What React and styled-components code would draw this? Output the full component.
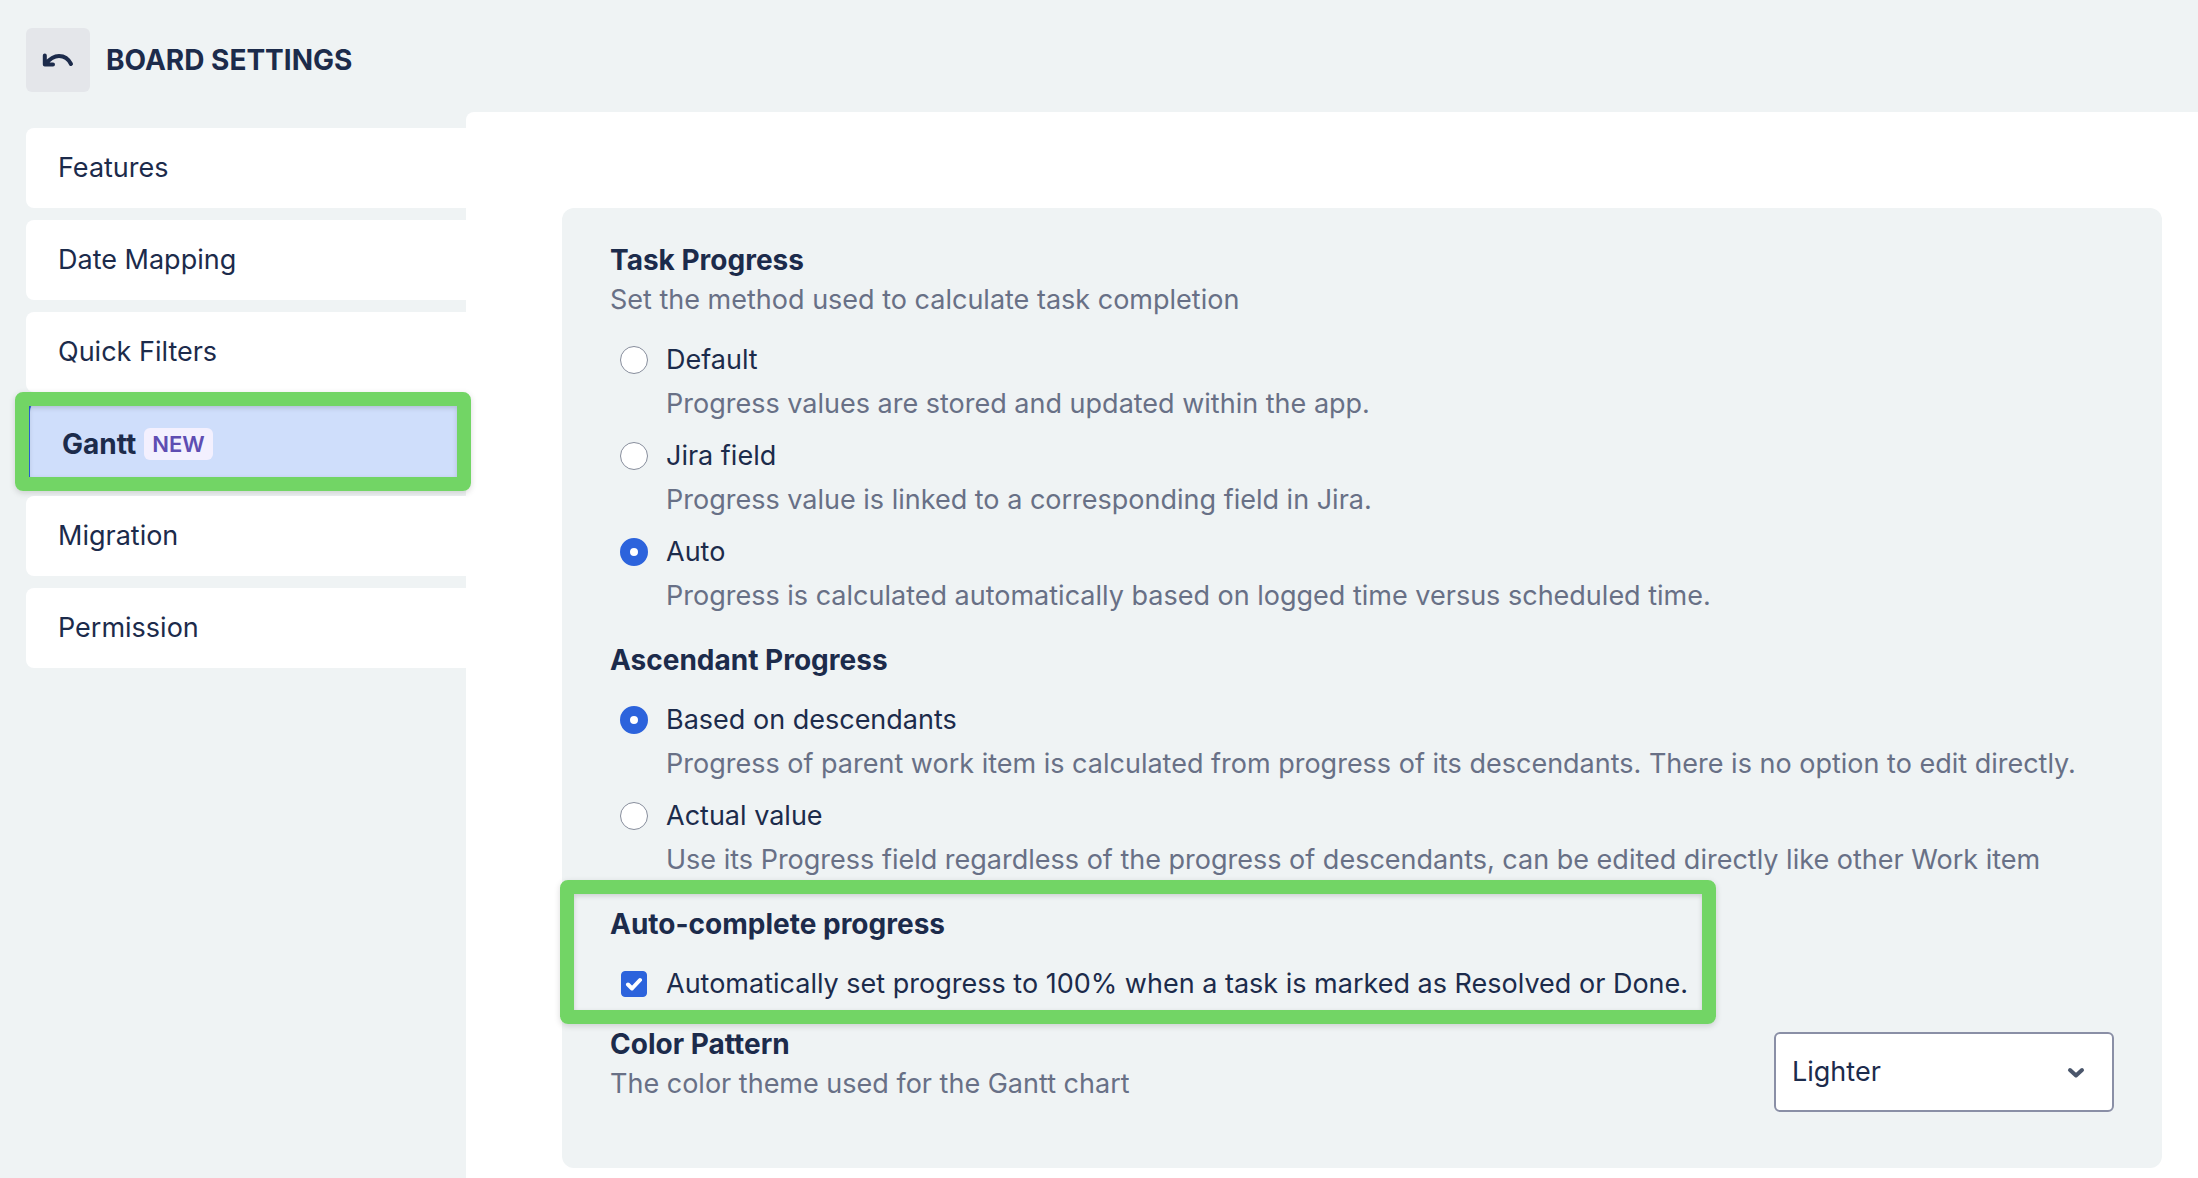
import React, { useState } from "react";
import styled, { createGlobalStyle } from "styled-components";

const GlobalStyle = createGlobalStyle`
  *, *::before, *::after {
    box-sizing: border-box;
  }

  body {
    margin: 0;
    background: #eff3f4;
    color: #1c2b4b;
    font-family: Inter, "Liberation Sans", sans-serif;
    font-size: 27px;
    line-height: 40px;
  }
`;

const Page = styled.div`
  display: flex;
  flex-direction: column;
  min-height: 100vh;
`;

const Header = styled.header`
  display: flex;
  align-items: center;
  gap: 16px;
  padding: 28px 26px 20px;
`;

const BackButton = styled.button`
  display: flex;
  align-items: center;
  justify-content: center;
  width: 64px;
  height: 64px;
  padding: 0;
  border: 0;
  border-radius: 6px;
  background: #e4e6ea;
  color: inherit;
  cursor: pointer;
`;

const Title = styled.h1`
  margin: 0;
  font-size: 28px;
  font-weight: 700;
`;

const Body = styled.div`
  display: flex;
  flex: 1;
`;

const Nav = styled.nav`
  display: flex;
  flex-direction: column;
  flex: 0 0 440px;
  gap: 12px;
  margin: 16px 0 0 26px;
`;

const NavItem = styled.div`
  position: relative;
`;

const NavLink = styled.a`
  display: flex;
  align-items: center;
  gap: 8px;
  height: 80px;
  padding-left: 32px;
  border-left: ${({ $active }) => ($active ? "4px solid #2c63dc" : "0")};
  border-radius: 8px 0 0 8px;
  background: ${({ $active }) => ($active ? "#cfdefb" : "#fff")};
  color: inherit;
  font-size: ${({ $active }) => ($active ? 28 : 27)}px;
  font-weight: ${({ $active }) => ($active ? 700 : 400)};
  text-decoration: none;
`;

const Badge = styled.span`
  padding: 0 8px;
  border-radius: 6px;
  background: #f3f0fe;
  color: #5e4db2;
  font-size: 22px;
  font-weight: 600;
  line-height: 32px;
`;

const Highlight = styled.div`
  position: absolute;
  inset: ${({ $inset }) => $inset};
  border: 14px solid #72d565;
  border-radius: 8px;
  box-shadow: 0 2px 6px rgba(0, 0, 0, 0.15),
    inset 0 2px 5px rgba(0, 0, 0, 0.15);
  pointer-events: none;
`;

const Main = styled.main`
  flex: 1;
  min-width: 0;
  padding: 96px 36px 10px 96px;
  border-top-left-radius: 8px;
  background: #fff;
`;

const Panel = styled.form`
  padding: 32px 48px 56px;
  border-radius: 12px;
  background: #eff3f4;
`;

const Section = styled.fieldset`
  position: relative;
  width: fit-content;
  margin: 0 0 ${({ $tight }) => ($tight ? 16 : 24)}px;
  padding: 0;
  border: 0;
`;

const Heading = styled.legend`
  padding: 0;
  font-size: 28px;
  font-weight: 700;
`;

const Hint = styled.p`
  margin: 0;
  color: #687086;
`;

const Options = styled.div`
  display: flex;
  flex-direction: column;
  gap: 8px;
  padding: 16px 0 0 10px;
`;

const Choice = styled.div`
  display: grid;
  grid-template-columns: 28px auto;
  column-gap: 18px;
  align-items: center;

  ${Hint} {
    grid-column: 2;
  }
`;

const ChoiceLabel = styled.label`
  line-height: 48px;
`;

const Radio = styled.input`
  appearance: none;
  width: 28px;
  height: 28px;
  margin: 0;
  border: 1px solid #878d9c;
  border-radius: 50%;
  background: #fff;

  &:checked {
    border: 10px solid #2c63dc;
  }
`;

const CheckWrap = styled.span`
  position: relative;
  display: grid;
  place-items: center;

  svg {
    position: absolute;
    pointer-events: none;
  }
`;

const Checkbox = styled.input`
  appearance: none;
  width: 26px;
  height: 26px;
  margin: 0;
  border: 1px solid #878d9c;
  border-radius: 4px;
  background: #fff;

  &:checked {
    border-color: #2c63dc;
    background: #2c63dc;
  }
`;

const ColorRow = styled.div`
  display: flex;
  align-items: flex-start;
  justify-content: space-between;
`;

const ColorLabel = styled.label`
  display: block;
  font-size: 28px;
  font-weight: 700;
`;

const SelectWrap = styled.div`
  position: relative;
  padding-top: 8px;

  svg {
    position: absolute;
    right: 29px;
    bottom: 33px;
    pointer-events: none;
  }
`;

const Select = styled.select`
  display: block;
  appearance: none;
  width: 340px;
  height: 80px;
  padding: 0 16px;
  border: 2px solid #8a8fa6;
  border-radius: 6px;
  background: #fff;
  color: inherit;
  font: inherit;
`;

const NAV_ITEMS = [
  "Features",
  "Date Mapping",
  "Quick Filters",
  "Gantt",
  "Migration",
  "Permission",
];

const TASK_OPTIONS = [
  {
    value: "default",
    label: "Default",
    hint: "Progress values are stored and updated within the app.",
  },
  {
    value: "jira",
    label: "Jira field",
    hint: "Progress value is linked to a corresponding field in Jira.",
  },
  {
    value: "auto",
    label: "Auto",
    hint: "Progress is calculated automatically based on logged time versus scheduled time.",
  },
];

const ASCENDANT_OPTIONS = [
  {
    value: "descendants",
    label: "Based on descendants",
    hint: "Progress of parent work item is calculated from progress of its descendants. There is no option to edit directly.",
  },
  {
    value: "actual",
    label: "Actual value",
    hint: "Use its Progress field regardless of the progress of descendants, can be edited directly like other Work item",
  },
];

const UndoIcon = () => (
  <svg width="32" height="14" viewBox="0 0 32 14" fill="none" aria-hidden="true">
    <path
      d="M2.8 2.6v9H11M3.5 11C8 5.500 12 3 17 3c5.500 0 9.500 3 12 8"
      stroke="currentColor"
      strokeWidth="4"
      strokeLinecap="round"
      strokeLinejoin="round"
    />
  </svg>
);

const CheckIcon = () => (
  <svg width="18" height="14" viewBox="0 0 18 14" fill="none" aria-hidden="true">
    <path
      d="M3 7.500l4 4L15 3"
      stroke="#fff"
      strokeWidth="4"
      strokeLinecap="round"
      strokeLinejoin="round"
    />
  </svg>
);

const ChevronIcon = () => (
  <svg width="18" height="12" viewBox="0 0 18 12" fill="none" aria-hidden="true">
    <path
      d="M3 3l6 5.500L15 3"
      stroke="#4a566b"
      strokeWidth="4"
      strokeLinecap="round"
      strokeLinejoin="round"
    />
  </svg>
);

const RadioOptions = ({ name, options, value, onChange }) => (
  <Options>
    {options.map((option) => (
      <Choice key={option.value}>
        <Radio
          type="radio"
          id={`${name}-${option.value}`}
          name={name}
          checked={value === option.value}
          onChange={() => onChange(option.value)}
        />
        <ChoiceLabel htmlFor={`${name}-${option.value}`}>
          {option.label}
        </ChoiceLabel>
        <Hint>{option.hint}</Hint>
      </Choice>
    ))}
  </Options>
);

const App = () => {
  const [taskProgress, setTaskProgress] = useState("auto");
  const [ascendant, setAscendant] = useState("descendants");
  const [autoComplete, setAutoComplete] = useState(true);
  const [pattern, setPattern] = useState("Lighter");

  return (
    <Page>
      <GlobalStyle />
      <Header>
        <BackButton type="button" aria-label="Back">
          <UndoIcon />
        </BackButton>
        <Title>BOARD SETTINGS</Title>
      </Header>
      <Body>
        <Nav>
          {NAV_ITEMS.map((item) => {
            const active = item === "Gantt";
            return (
              <NavItem key={item}>
                <NavLink href="#" $active={active}>
                  {item}
                  {active && <Badge>NEW</Badge>}
                </NavLink>
                {active && <Highlight $inset="-12px -5px -7px -11px" />}
              </NavItem>
            );
          })}
        </Nav>
        <Main>
          <Panel>
            <Section>
              <Heading>Task Progress</Heading>
              <Hint>Set the method used to calculate task completion</Hint>
              <RadioOptions
                name="task"
                options={TASK_OPTIONS}
                value={taskProgress}
                onChange={setTaskProgress}
              />
            </Section>
            <Section>
              <Heading>Ascendant Progress</Heading>
              <RadioOptions
                name="ascendant"
                options={ASCENDANT_OPTIONS}
                value={ascendant}
                onChange={setAscendant}
              />
            </Section>
            <Section $tight>
              <Heading>Auto-complete progress</Heading>
              <Options>
                <Choice>
                  <CheckWrap>
                    <Checkbox
                      type="checkbox"
                      id="auto-complete"
                      checked={autoComplete}
                      onChange={(e) => setAutoComplete(e.target.checked)}
                    />
                    {autoComplete && <CheckIcon />}
                  </CheckWrap>
                  <ChoiceLabel htmlFor="auto-complete">
                    Automatically set progress to 100% when a task is marked as
                    Resolved or Done.
                  </ChoiceLabel>
                </Choice>
              </Options>
              {/* the fieldset's box starts below its legend, so the top offset covers it */}
              <Highlight $inset="-64px -28px -16px -50px" />
            </Section>
            <ColorRow>
              <div>
                <ColorLabel htmlFor="color-pattern">Color Pattern</ColorLabel>
                <Hint>The color theme used for the Gantt chart</Hint>
              </div>
              <SelectWrap>
                <Select
                  id="color-pattern"
                  value={pattern}
                  onChange={(e) => setPattern(e.target.value)}
                >
                  <option>Lighter</option>
                  <option>Darker</option>
                </Select>
                <ChevronIcon />
              </SelectWrap>
            </ColorRow>
          </Panel>
        </Main>
      </Body>
    </Page>
  );
};

export default App;
